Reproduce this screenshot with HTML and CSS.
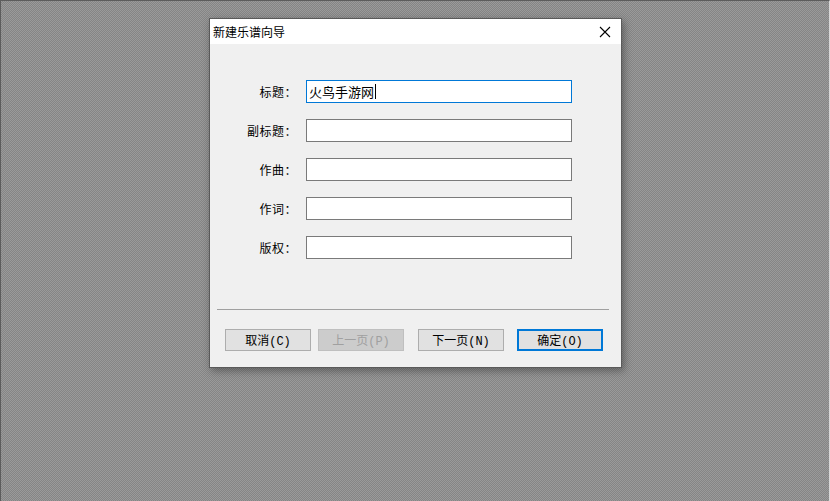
FILE: index.html
```html
<!DOCTYPE html>
<html lang="zh-CN">
<head>
    <meta charset="UTF-8">
    <title>新建乐谱向导</title>
    <link rel="stylesheet" href="styles.css">
</head>
<body>
    <div class="desktop">
        <!-- Dialog window -->
        <div class="dialog">
            <div class="titlebar">
                <span class="title">新建乐谱向导</span>
                <svg class="close" width="12" height="12" viewBox="0 0 12 12">
                    <path d="M1 1 L11 11 M11 1 L1 11" stroke="#000" stroke-width="1.1" fill="none"/>
                </svg>
            </div>
            <div class="body">
                <div class="form">
                    <label>标题：</label>
                    <div class="field focused">火鸟手游网<span class="caret"></span></div>
                    <label>副标题：</label>
                    <div class="field"></div>
                    <label>作曲：</label>
                    <div class="field"></div>
                    <label>作词：</label>
                    <div class="field"></div>
                    <label>版权：</label>
                    <div class="field"></div>
                </div>
                <div class="separator"></div>
                <div class="buttons">
                    <button class="btn">取消(C)</button>
                    <button class="btn disabled">上一页(P)</button>
                    <button class="btn next">下一页(N)</button>
                    <button class="btn default">确定(O)</button>
                </div>
            </div>
        </div>
    </div>
</body>
</html>
```

FILE: styles.css
```css
html, body {
    margin: 0;
    padding: 0;
    height: 100%;
}

body {
    font-family: "Noto Sans CJK SC", "Liberation Sans", sans-serif;
    font-size: 12px;
    color: #000;
}

/* Desktop background (dithered gray) */
.desktop {
    box-sizing: border-box;
    height: 501px;
    width: 830px;
    overflow: hidden;
    border-left: 1px solid #5c5c5c;
    border-top: 1px solid #5c5c5c;
    border-right: 1px solid #d8d8d8;
    background-color: #909090;
    background-image: repeating-conic-gradient(#858585 0 25%, #9a9a9a 0 50%);
    background-size: 2px 2px;
    padding: 17px 0 0 208px;
}

/* Dialog */
.dialog {
    width: 411px;
    border: 1px solid #5a5a5a;
    background: #f0f0f0;
    box-shadow: 2px 3px 8px rgba(0, 0, 0, 0.35);
}

.titlebar {
    height: 25px;
    background: #fff;
    display: flex;
    align-items: center;
    justify-content: space-between;
    padding: 0 10px 0 3px;
}

.title {
    font-size: 12px;
    line-height: 25px;
}

.close {
    display: block;
}

.body {
    height: 323px;
    padding-top: 36px;
    box-sizing: border-box;
}

.form {
    display: grid;
    grid-template-columns: 87px 266px;
    column-gap: 9px;
    row-gap: 16px;
    align-items: center;
}

.form label {
    text-align: right;
    font-size: 12px;
    letter-spacing: 0.5px;
}

.field {
    box-sizing: border-box;
    height: 23px;
    background: #fff;
    border: 1px solid #7a7a7a;
    font-size: 13px;
    line-height: 20px;
    padding-left: 2px;
    display: flex;
    align-items: center;
}

.field.focused {
    border-color: #0078d7;
}

.caret {
    display: inline-block;
    width: 1px;
    height: 15px;
    background: #000;
    margin-left: 1px;
}

.separator {
    height: 1px;
    background: #a0a0a0;
    margin: 50px 12px 0 7px;
}

.buttons {
    display: flex;
    padding: 19px 0 0 15px;
}

.btn {
    box-sizing: border-box;
    width: 86px;
    height: 22px;
    padding: 0;
    font-family: "Liberation Mono", "Noto Sans CJK SC", monospace;
    font-size: 12px;
    color: #000;
    background: #e1e1e1;
    border: 1px solid #adadad;
}

.btn.disabled {
    margin-left: 7px;
    color: #a0a0a0;
    background: #cccccc;
    border-color: #bfbfbf;
}

.btn.next {
    margin-left: 14px;
}

.btn.default {
    margin-left: 13px;
    border: 2px solid #0078d7;
}
```
